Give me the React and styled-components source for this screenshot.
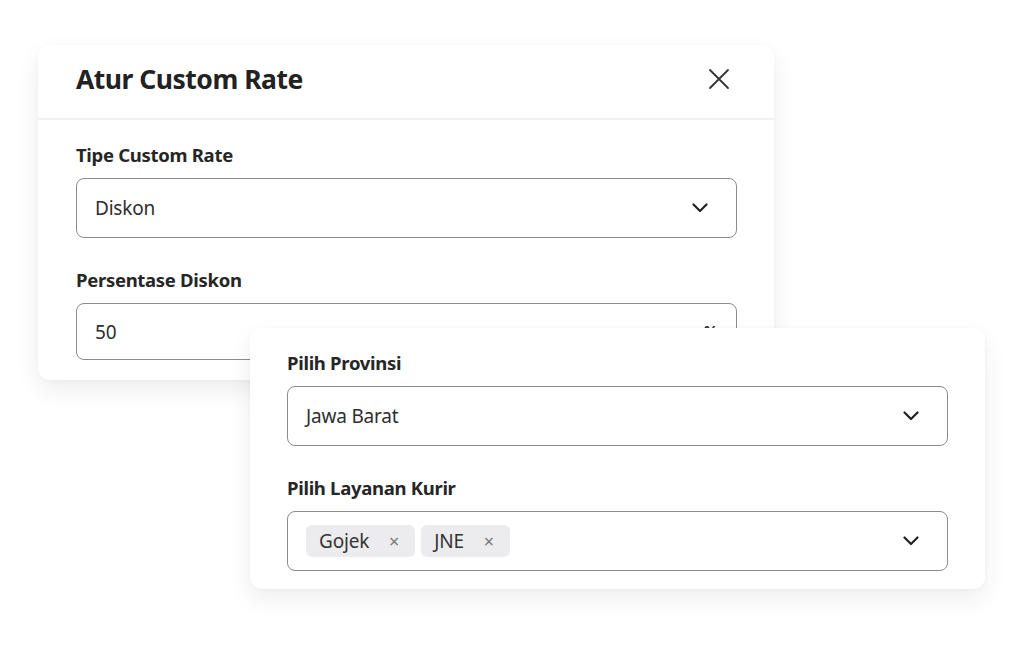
import React from "react";
import styled, { createGlobalStyle } from "styled-components";

const GlobalStyle = createGlobalStyle`
  html, body {
    margin: 0;
    padding: 0;
    background: #ffffff;
  }
  body {
    font-family: "Noto Sans", "Open Sans", sans-serif;
    color: #2b2b2b;
  }
`;

const Stage = styled.div`
  position: relative;
  width: 1024px;
  height: 664px;
  overflow: hidden;
  padding-top: 45px;
  box-sizing: border-box;
`;

const Card = styled.div`
  background: #ffffff;
  border-radius: 12px;
  box-shadow: 0 10px 24px rgba(0, 0, 0, 0.07), 0 1px 4px rgba(0, 0, 0, 0.03);
  box-sizing: border-box;
`;

const RateCard = styled(Card)`
  margin-left: 38px;
  width: 736px;
  height: 335px;
  overflow: hidden;
`;

// lies over the first card
const CourierCard = styled(Card)`
  position: absolute;
  left: 250px;
  top: 328px;
  width: 735px;
  padding: 24px 37px 18px;
`;

const Header = styled.div`
  height: 75px;
  display: flex;
  align-items: center;
  justify-content: space-between;
  padding: 0 44px 6px 38px;
  border-bottom: 2px solid #f1f1f1;
  box-sizing: border-box;
`;

const Title = styled.h1`
  margin: 0;
  font-size: 26.5px;
  font-weight: 700;
  letter-spacing: -0.5px;
  color: #222;
`;

const CloseButton = styled.button`
  border: 0;
  background: none;
  padding: 0;
  display: flex;
  color: #333;
`;

const Body = styled.div`
  padding: 24px 37px 0 38px;
`;

const Field = styled.div`
  & + & {
    margin-top: 31px;
  }
`;

const Label = styled.div`
  font-size: 18.5px;
  font-weight: 700;
  line-height: 22px;
  letter-spacing: -0.3px;
  color: #262626;
  margin-bottom: 12px;
`;

const Control = styled.div`
  height: ${(p) => p.$h || 60}px;
  border: 1.5px solid #8c8c8c;
  border-radius: 8px;
  display: flex;
  align-items: center;
  padding: 0 28px 0 18px;
  box-sizing: border-box;
  font-size: 19px;
  letter-spacing: -0.2px;
  color: #2e2e2e;
  gap: 6px;
`;

const Value = styled.span`
  flex: 1;
`;

const Suffix = styled.span`
  font-size: 16px;
  font-weight: 700;
  color: #333;
  margin-right: -10px;
`;

const Chip = styled.span`
  display: inline-flex;
  align-items: center;
  gap: 20px;
  height: 32px;
  padding: 0 16px 0 13px;
  background: #ececee;
  border-radius: 6px;
  font-size: 19px;
  color: #333;
`;

const ChipX = styled.span`
  font-size: 18px;
  color: #777;
`;

const Chevron = () => (
  <svg width="16" height="10" viewBox="0 0 16 10" fill="none">
    <path d="M1.5 1.5L8 8l6.5-6.5" stroke="#222" strokeWidth="2.2" strokeLinecap="round" strokeLinejoin="round" />
  </svg>
);

const CloseIcon = () => (
  <svg width="22" height="22" viewBox="0 0 22 22" fill="none">
    <path d="M2 2l18 18M20 2L2 20" stroke="#333" strokeWidth="1.8" strokeLinecap="round" />
  </svg>
);

const App = () => (
  <Stage>
    <GlobalStyle />
    <RateCard>
      <Header>
        <Title>Atur Custom Rate</Title>
        <CloseButton aria-label="Tutup">
          <CloseIcon />
        </CloseButton>
      </Header>
      <Body>
        <Field>
          <Label>Tipe Custom Rate</Label>
          <Control>
            <Value>Diskon</Value>
            <Chevron />
          </Control>
        </Field>
        <Field>
          <Label>Persentase Diskon</Label>
          <Control $h={57}>
            <Value>50</Value>
            <Suffix>%</Suffix>
          </Control>
        </Field>
      </Body>
    </RateCard>

    <CourierCard>
      <Field>
        <Label>Pilih Provinsi</Label>
        <Control>
          <Value>Jawa Barat</Value>
          <Chevron />
        </Control>
      </Field>
      <Field>
        <Label>Pilih Layanan Kurir</Label>
        <Control>
          <Chip>
            Gojek <ChipX>×</ChipX>
          </Chip>
          <Chip>
            JNE <ChipX>×</ChipX>
          </Chip>
          <Value />
          <Chevron />
        </Control>
      </Field>
    </CourierCard>
  </Stage>
);

export default App;
